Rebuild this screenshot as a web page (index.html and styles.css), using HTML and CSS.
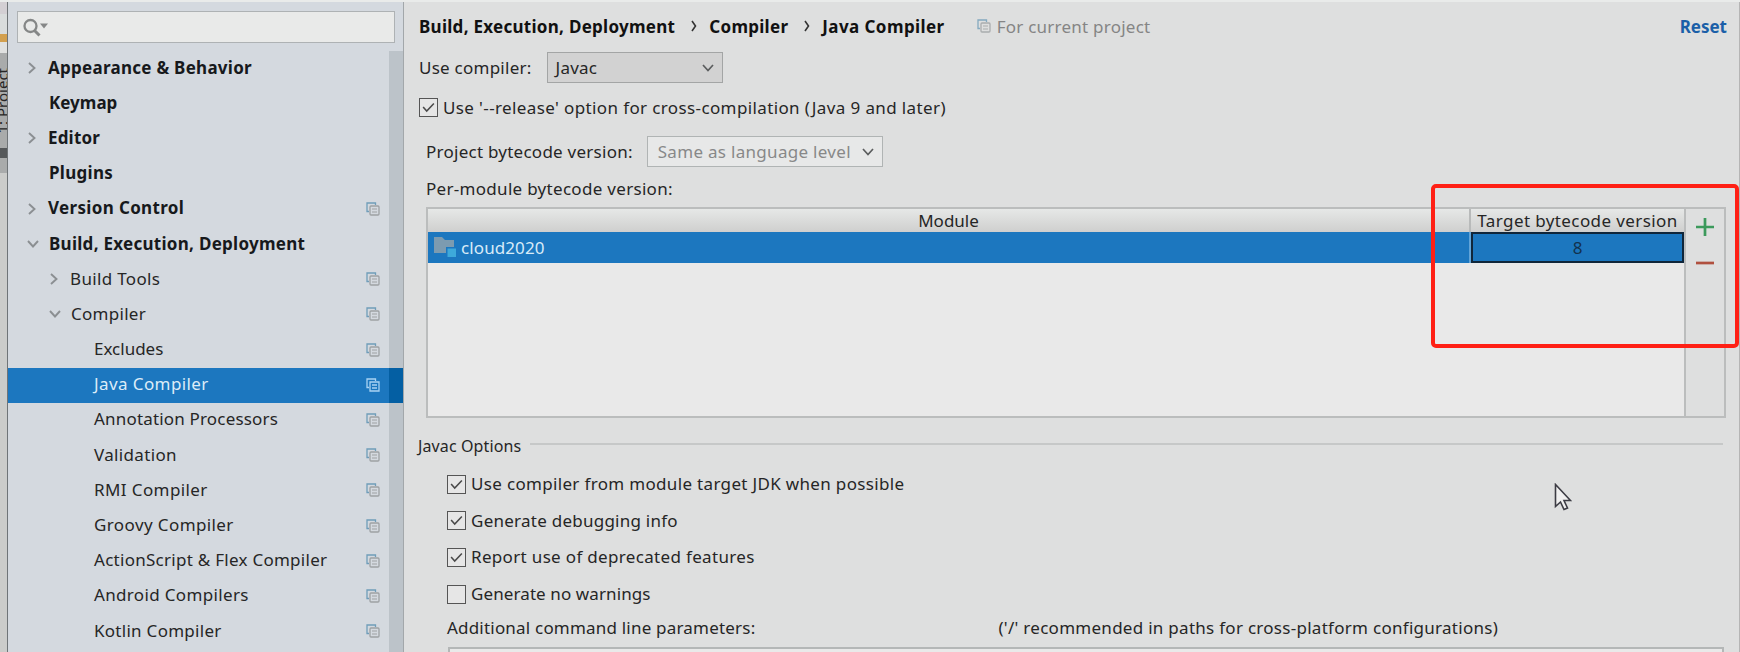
FILE: index.html
```html
<!DOCTYPE html>
<html lang="en">
<head>
<meta charset="utf-8">
<title>Settings</title>
<link rel="stylesheet" href="styles.css">
</head>
<body>
<svg width="0" height="0" class="defs">
  <symbol id="copy" viewBox="0 0 14 14"><path d="M3 9.5H1V1h8.5v2" fill="none" stroke="#6f9db9" stroke-width="1.3"/><rect x="4" y="4" width="9" height="9" rx="1" fill="none" stroke="#9da1a4" stroke-width="1.3"/><path d="M6 7h5M6 10h5" stroke="#9da1a4" stroke-width="1.2"/></symbol>
  <symbol id="copy-sel" viewBox="0 0 14 14"><path d="M3 9.5H1V1h8.5v2M4 4h9v9H4zM6 7h5M6 10h5" fill="none" stroke="#a9d3f3" stroke-width="1.3"/></symbol>
  <symbol id="right" viewBox="0 0 8 12"><path d="M1 1l5.500 5L1 11" fill="none" stroke="#8b8f92" stroke-width="1.9"/></symbol>
  <symbol id="down" viewBox="0 0 12 8"><path d="M1 1l5 5.500L11 1" fill="none" stroke="#8b8f92" stroke-width="1.9"/></symbol>
  <symbol id="combo" viewBox="0 0 12 8"><path d="M1 1l5 5.500L11 1" fill="none" stroke="#5b5d5e" stroke-width="1.7"/></symbol>
  <symbol id="crumb" viewBox="0 0 6 12"><path d="M1 1l3.500 5L1 11" fill="none" stroke="#333" stroke-width="1.6"/></symbol>
  <symbol id="tick" viewBox="0 0 19 19"><path d="M3.500 9l4 4.500L15.500 5" fill="none" stroke="#4a4a4a" stroke-width="1.700"/></symbol>
</svg>
<div class="window">
  <div class="edge">
    <div class="edge-top"></div><div class="edge-tab"></div><div class="edge-orange"></div><div class="edge-gap"></div>
    <div class="edge-project"><span>1: Project</span></div>
    <div class="edge-icon"></div><div class="edge-grey"></div>
  </div>
  <aside class="sidebar">
    <div class="search">
      <svg width="28" height="20" viewBox="0 0 28 20"><circle cx="8.500" cy="8" r="6" fill="none" stroke="#858787" stroke-width="2.300"/><path d="M12.500 12.500l5 5" stroke="#858787" stroke-width="3"/><path d="M18 5.500h8l-4 5z" fill="#858787"/></svg>
    </div>
    <div class="tree">
      <div class="row l0 b"><svg class="ar"><use href="#right"/></svg><span class="t0">Appearance &amp; Behavior</span></div>
      <div class="row l0 b leaf"><span class="t1">Keymap</span></div>
      <div class="row l0 b"><svg class="ar"><use href="#right"/></svg><span class="t2">Editor</span></div>
      <div class="row l0 b leaf"><span class="t3">Plugins</span></div>
      <div class="row l0 b"><svg class="ar"><use href="#right"/></svg><span class="t4">Version Control</span><svg class="cp"><use href="#copy"/></svg></div>
      <div class="row l0 b open"><svg class="ad"><use href="#down"/></svg><span class="t5">Build, Execution, Deployment</span></div>
      <div class="row l1"><svg class="ar"><use href="#right"/></svg><span class="t6">Build Tools</span><svg class="cp"><use href="#copy"/></svg></div>
      <div class="row l1 open"><svg class="ad"><use href="#down"/></svg><span class="t7">Compiler</span><svg class="cp"><use href="#copy"/></svg></div>
      <div class="row l2"><span class="t8">Excludes</span><svg class="cp"><use href="#copy"/></svg></div>
      <div class="row l2 selected"><span class="t9">Java Compiler</span><svg class="cp"><use href="#copy-sel"/></svg></div>
      <div class="row l2"><span class="t10">Annotation Processors</span><svg class="cp"><use href="#copy"/></svg></div>
      <div class="row l2"><span class="t11">Validation</span><svg class="cp"><use href="#copy"/></svg></div>
      <div class="row l2"><span class="t12">RMI Compiler</span><svg class="cp"><use href="#copy"/></svg></div>
      <div class="row l2"><span class="t13">Groovy Compiler</span><svg class="cp"><use href="#copy"/></svg></div>
      <div class="row l2"><span class="t14">ActionScript &amp; Flex Compiler</span><svg class="cp"><use href="#copy"/></svg></div>
      <div class="row l2"><span class="t15">Android Compilers</span><svg class="cp"><use href="#copy"/></svg></div>
      <div class="row l2"><span class="t16">Kotlin Compiler</span><svg class="cp"><use href="#copy"/></svg></div>
      <div class="track"></div>
    </div>
  </aside>
  <main class="main">
    <header class="crumbs">
      <b class="c1">Build, Execution, Deployment</b><svg class="cr"><use href="#crumb"/></svg><b class="c2">Compiler</b><svg class="cr"><use href="#crumb"/></svg><b class="c3">Java Compiler</b>
      <svg class="cp scope-icon"><use href="#copy"/></svg><span class="scope">For current project</span><b class="reset">Reset</b>
    </header>
    <div class="line compiler"><span class="m1">Use compiler:</span><div class="select"><span class="m2">Javac</span><svg class="cb"><use href="#combo"/></svg></div></div>
    <div class="line release"><svg class="check"><use href="#tick"/></svg><span class="m3">Use '--release' option for cross-compilation (Java 9 and later)</span></div>
    <div class="line project"><span class="m4">Project bytecode version:</span><div class="select light"><span class="m5">Same as language level</span><svg class="cb"><use href="#combo"/></svg></div></div>
    <div class="line module"><span class="m6">Per-module bytecode version:</span></div>
    <section class="table">
      <div class="grid">
        <div class="head"><div class="h-mod"><span class="g1">Module</span></div><div class="h-ver"><span class="g2">Target bytecode version</span></div></div>
        <div class="data"><div class="d-mod"><svg width="23" height="21" viewBox="0 0 23 21"><path d="M0 0h8l3 3h9v13H0z" fill="#7c9bb0"/><path d="M12 10h10.500v10.500H12z" fill="#1c77bf"/><path d="M13.500 11.500h8.500v8.500h-8.500z" fill="#3ea9da"/></svg><span class="g3">cloud2020</span></div><div class="d-ver">8</div></div>
      </div>
      <div class="tools">
        <svg width="18" height="18" viewBox="0 0 18 18"><path d="M9 0v18M0 9h18" stroke="#3c9a5c" stroke-width="2.700"/></svg>
        <svg width="18" height="4" viewBox="0 0 18 4"><path d="M0 2h18" stroke="#b0503f" stroke-width="2.700"/></svg>
      </div>
      <div class="highlight"></div>
    </section>
    <div class="group"><span class="o0">Javac Options</span><i></i></div>
    <div class="options">
      <div class="opt"><svg class="check"><use href="#tick"/></svg><span class="o1">Use compiler from module target JDK when possible</span></div>
      <div class="opt"><svg class="check"><use href="#tick"/></svg><span class="o2">Generate debugging info</span></div>
      <div class="opt"><svg class="check"><use href="#tick"/></svg><span class="o3">Report use of deprecated features</span></div>
      <div class="opt"><svg class="check"></svg><span class="o4">Generate no warnings</span></div>
    </div>
    <div class="params"><span class="o5">Additional command line parameters:</span><span class="o6">('/' recommended in paths for cross-platform configurations)</span></div>
    <div class="field"></div>
  </main>
  <svg class="cursor" width="18" height="28" viewBox="0 0 18 28"><path d="M1.500 1.500v22l5-4.500 3.500 7.500 3.500-1.500-3.500-7.500h6.500z" fill="#f0f0f0" stroke="#3c3c44" stroke-width="1.600"/></svg>
</div>
</body>
</html>
```
FILE: styles.css
```css
* { box-sizing: border-box; }
body { margin: 0; width: 1740px; height: 652px; overflow: hidden; font-family: "Noto Sans", "Open Sans", sans-serif; font-size: 17px; color: #262626; background: #dedede; }
.defs { position: absolute; }
svg { flex: none; display: block; }
span, b { white-space: nowrap; }
.window { position: relative; display: flex; width: 1740px; height: 652px; overflow: hidden; border-top: 2px solid #e9ebea; }
.edge { width: 8px; flex: none; border-right: 1px solid #6f7477; background: #cbccca; overflow: hidden; }
.edge-top { height: 12px; background: #d3cfd3; }
.edge-tab { height: 20px; background: #d9dcdc; }
.edge-orange { height: 8px; background: #d3a04e; }
.edge-gap { height: 11px; background: #e0e1e0; }
.edge-project { height: 95px; background: #a9abab; display: flex; justify-content: flex-end; align-items: center; font-size: 15px; overflow: hidden; }
.edge-project span { flex: none; writing-mode: vertical-rl; transform: rotate(180deg); line-height: 18px; margin-right: -4px; }
.edge-icon { height: 10px; background: #55585a; }
.edge-grey { height: 15px; background: #a9abab; }

.sidebar { width: 396px; flex: none; background: #d4d9df; border-right: 1px solid #a2a7aa; }
.search { margin: 9px 0 0 9px; width: 378px; height: 32px; border: 1.500px solid #aeb2b4; background: #e9eae9; padding: 6px 0 0 4px; }
.tree { position: relative; margin-top: 8px; }
.row { height: 35.200px; display: flex; align-items: center; padding-bottom: 1px; }
.row > span { margin-top: -2px; }
.row .cp { margin-left: auto; margin-right: 23px; }
.cp { width: 14px; height: 14px; }
.row.b { font-weight: 700; color: #17191c; }
.ar { width: 8px; height: 12px; margin-right: 12px; }
.ad { width: 12px; height: 8px; margin-right: 10px; }
.l0 { padding-left: 20px; }
.l0.leaf { padding-left: 41px; }
.l0.open { padding-left: 19px; }
.l1 { padding-left: 42px; }
.l1.open { padding-left: 41px; }
.l2 { padding-left: 86px; }
.selected { background: linear-gradient(to left, #0569b4 14px, #1c77bf 14px); color: #dcecf8; }
.track { position: absolute; right: 0; top: 0; width: 14px; height: 602px; background: rgba(0, 20, 30, 0.11); }
.t0, .t14 { letter-spacing: .27px; }
.t2, .t10 { letter-spacing: .18px; }
.t3, .t5, .t7, .t16 { letter-spacing: .28px; }
.t4, .t6, .t11, .t15 { letter-spacing: .34px; }
.t9, .t12, .t13 { letter-spacing: .4px; }

.main { flex: 1; min-width: 0; border-right: 1px solid #b5b5b5; background: #dedfdf; }
.crumbs { display: flex; align-items: center; height: 30px; margin: 9px 12px 0 15px; color: #111; }
.c1, .c2 { letter-spacing: .28px; }
.c3 { letter-spacing: .42px; }
.cr { width: 6px; height: 12px; margin: 0 12px 0 16px; }
.scope-icon { margin-left: 32px; opacity: .8; }
.scope { margin-left: 6px; color: #858585; letter-spacing: .24px; }
.reset { margin-left: auto; color: #1b5fa8; }
.line { display: flex; align-items: center; margin-left: 15px; }
.compiler { height: 31px; margin-top: 11px; }
.m1, .m4 { letter-spacing: .25px; }
.m2 { letter-spacing: .2px; }
.m3 { letter-spacing: .38px; }
.m5, .m6 { letter-spacing: .3px; }
.select { display: flex; align-items: center; justify-content: space-between; height: 31px; border: 1.500px solid #a3a5a5; background: #d2d2d2; padding: 0 8px; }
.compiler .select { width: 176px; margin-left: 15px; }
.cb { width: 12px; height: 8px; }
.release { height: 20px; margin-top: 14px; }
.check { width: 19px; height: 19px; border: 1.500px solid #555; background: #e6e6e6; margin-right: 5px; }
.project { height: 31px; margin: 19px 0 0 22px; }
.select.light { width: 236px; margin-left: 14px; background: #e7e8e8; border-color: #b0b4b4; color: #888; padding-left: 10px; }
.module { height: 24px; margin: 9px 0 0 22px; }
.table { position: relative; display: flex; width: 1300px; height: 211px; margin: 7px 0 0 22px; border: 2px solid #bbbdbd; background: #e9e9e9; }
.grid { flex: 1; }
.head { height: 23px; display: flex; background: linear-gradient(#e6e8e7, #cfcfce); }
.h-mod, .h-ver { display: flex; align-items: center; justify-content: center; }
.h-mod { flex: 1; border-right: 2px solid #b8baba; }
.h-ver { width: 213px; }
.g2 { letter-spacing: .4px; }
.data { height: 31px; display: flex; color: #d8ebf8; background: #1c77bf; }
.d-mod { flex: 1; display: flex; align-items: center; gap: 4px; padding-left: 6px; border-right: 2px solid #61a4d8; }
.g3 { letter-spacing: .1px; }
.d-ver { width: 213px; border: 2px solid #10263a; color: #12314d; display: flex; align-items: center; justify-content: center; }
.tools { width: 40px; border-left: 2px solid #bbbdbd; background: #dedfdf; display: flex; flex-direction: column; align-items: center; padding-top: 9px; gap: 25px; }
.highlight { position: absolute; left: 1003px; top: -25px; width: 308px; height: 164px; border: 4px solid #ff2015; border-radius: 5px; }
.group { display: flex; align-items: center; height: 24px; margin: 16px 16px 0 14px; font-size: 16px; }
.group i { flex: 1; height: 2px; background: #c6c8c8; margin: -4px 0 0 9px; }
.o0 { letter-spacing: .12px; }
.options { margin: 8px 0 0 43px; }
.opt { height: 36.600px; display: flex; align-items: center; }
.opt span { margin-top: -1px; }
.o1, .o3 { letter-spacing: .33px; }
.o2 { letter-spacing: .25px; }
.o4 { letter-spacing: .1px; }
.params { display: flex; align-items: center; height: 24px; margin: 3px 0 0 43px; }
.o5 { letter-spacing: .2px; }
.o6 { margin-left: 243px; letter-spacing: .28px; }
.field { height: 20px; margin: 8px 15px 0 44px; border: 2px solid #b4b7b7; background: #e9e9e9; }
.cursor { position: absolute; left: 1554px; top: 481px; }
```
